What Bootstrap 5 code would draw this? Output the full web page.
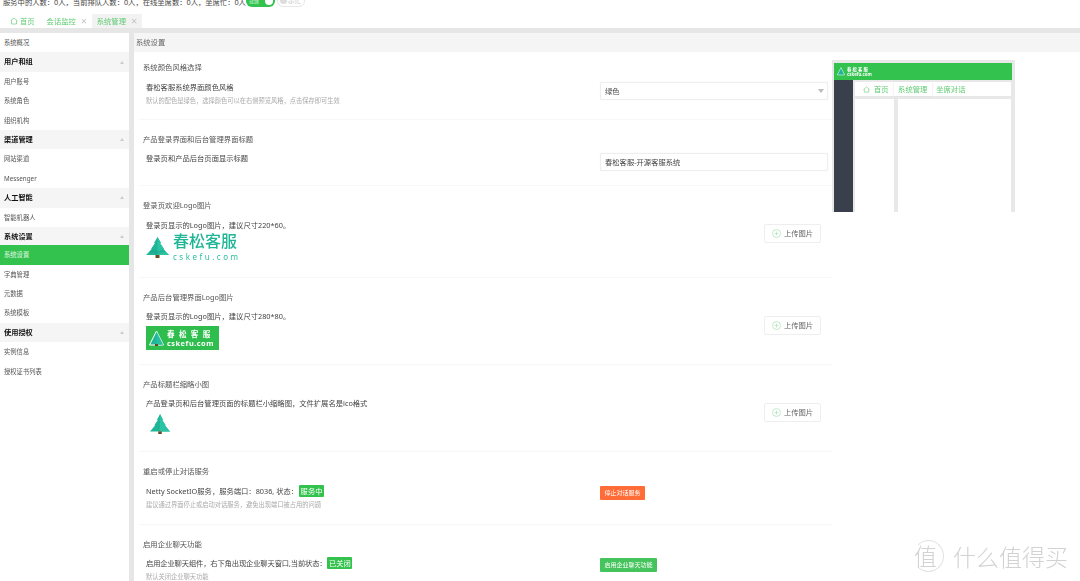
<!DOCTYPE html>
<html lang="zh-CN">
<head>
<meta charset="UTF-8">
<title>系统设置</title>
<link href="https://cdn.jsdelivr.net/npm/bootstrap@5.3.2/dist/css/bootstrap.min.css" rel="stylesheet">
<script src="https://cdn.jsdelivr.net/npm/bootstrap@5.3.2/dist/js/bootstrap.bundle.min.js"></script>
<style>
html, body { height: 100%; }
body {
    width: 1080px; height: 581px; overflow: hidden; position: relative;
    font-family: "Noto Sans", "Noto Sans CJK SC", sans-serif;
    color: #444; background: #e6e6e6; font-size: 7.3px; line-height: 14px;
    filter: blur(.3px);
}
.top-strip { height: 14px; background: #fff; overflow: hidden; padding-left: 3px; white-space: nowrap; }
.top-inner { height: 14px; margin-top: -5px; }
.stat-text { font-size: 7.3px; color: #444; }
.online-pill { width: 29px; height: 12px; background: #32c24d; border-radius: 6px; color: #d9f5df; font-size: 5px; padding: 0 0 0 3px; line-height: 12px; position: relative; }
.online-pill i { position: absolute; right: 2px; top: 2px; width: 8px; height: 8px; border-radius: 50%; background: #fff; }
.busy-pill { width: 28px; height: 12px; margin-left: 2px; border: 1px solid #e6e6e6; border-radius: 6px; color: #bbb; font-size: 6.5px; line-height: 10px; padding-left: 2px; background: #fff; }
.busy-pill i { display: inline-block; width: 7px; height: 7px; border-radius: 50%; background: #ddd; margin-right: 1px; vertical-align: -1px; }
.tab-strip { height: 14px; background: #fff; padding-left: 5px; }
.tab-strip .nav-link { height: 14px; padding: 0 5px; font-size: 7.3px; line-height: 14px; color: #5fcb72; border-radius: 0; display: flex; align-items: center; }
.tab-strip .nav-link.active { background: #f2f2f2; }
.tab-strip .tab-home { padding-right: 7px; }
.tab-home svg { margin-right: 2px; }
.tab-x { color: #c4c4c4; font-size: 11px; width: 6px; text-align: center; margin-left: 5px; }
.page-body { margin-top: 5px; height: 548px; }
.side-menu { width: 129px; background: #fff; margin-right: 5px; flex-shrink: 0; display: block; }
.side-menu .list-group-item { height: 19.4px; padding: 0 4px; border: 0; border-radius: 0; font-size: 6.3px; line-height: 19.4px; color: #555; background: #fff; }
.side-menu .list-group-item.menu-head { background: #f5f5f5; color: #111; font-size: 7.2px; font-weight: 700; display: flex; justify-content: space-between; align-items: center; }
.side-menu .list-group-item.active { background: #32c24d; color: #e8f8eb; }
.caret-up { width: 0; height: 0; border-left: 2.5px solid transparent; border-right: 2.5px solid transparent; border-bottom: 3px solid #ccc; margin-right: 1px; }
.main-pane { background: #fff; min-width: 0; }
.pane-title { height: 19px; background: #f5f5f5; padding-left: 2px; font-size: 7.3px; line-height: 19px; color: #666; }
.settings-col { width: 693px; margin-left: 5px; flex-shrink: 0; }
.set-item { border-bottom: 1px solid #f7f7f7; padding: 12px 4px 0; }
.set-item:first-child { padding-top: 8px; }
.set-item:last-child { border-bottom: 0; }
.h-s1 { height: 68px; } .h-s2 { height: 66px; } .h-s3 { height: 92px; } .h-s4 { height: 87px; }
.h-s5 { height: 87px; } .h-s6 { height: 73px; } .h-s7 { height: 60px; }
.set-title { color: #555; font-size: 7.35px; line-height: 14px; }
.set-row { margin-top: 5px; padding-left: 3px; }
.set-row.row-wide { margin-top: 6px; }
.set-label { color: #444; font-size: 7.3px; line-height: 14px; }
.tight-label { letter-spacing: -.15px; }
.set-hint { color: #aaa; font-size: 6.25px; line-height: 12px; margin-top: 1px; }
.ctl-col { width: 228px; flex-shrink: 0; }
.mt-ctl { margin-top: 2px; }
.mt-up1 { margin-top: 6px; } .mt-up2 { margin-top: 7px; }
.fake-input.form-control, .fake-input.form-select { height: 18px; min-height: 0; padding: 0 4px; font-size: 7.3px; line-height: 14px; border: 1px solid #eee; border-radius: 2px; color: #444; box-shadow: 0 0 1px #e6e6e6; }
.fake-input.form-select { background-image: url("data:image/svg+xml,%3Csvg xmlns='http://www.w3.org/2000/svg' viewBox='0 0 6 4'%3E%3Cpath d='M0 0h6L3 4z' fill='%23bbb'/%3E%3C/svg%3E"); background-size: 6px 4px; background-position: right 3px center; }
.upload-btn.btn { height: 19px; width: 57px; padding: 0; margin-right: 7px; border: 1px solid #eee; border-radius: 2px; background: #fff; color: #666; font-size: 7.3px; line-height: 17px; display: inline-flex; align-items: center; justify-content: center; gap: 3px; }
.act-btn.btn { height: 14px; padding: 0 4.5px; border: 0; border-radius: 1px; color: #fff; font-size: 6px; line-height: 14px; display: block; }
.act-stop.btn { background: #ff6c37; }
.act-start.btn { background: #45c35c; }
.state-tag.badge { background: #32c24d; color: #fff; font-size: 7.3px; font-weight: 400; line-height: 12px; padding: 0 1.5px; border-radius: 1px; margin-left: 1px; vertical-align: baseline; height: 12px; letter-spacing: 0; }
.logo-big { margin-top: 0; height: 30px; gap: 4px; }
.logo-big-name { color: #1fb596; font-size: 16px; font-weight: 500; line-height: 18px; margin-top: -1px; }
.logo-big-url { color: #2bbfa2; font-size: 8px; letter-spacing: 2.5px; line-height: 9px; margin-top: 2px; }
.logo-green { width: 73px; height: 24px; margin-top: 3px; background: #2fbd4d; gap: 3px; padding-left: 3px; }
.logo-green-name { color: #fff; font-size: 7.6px; font-weight: 700; letter-spacing: 4.300px; line-height: 10px; white-space: nowrap; }
.logo-green-url { color: #fff; font-size: 7.4px; font-weight: 700; letter-spacing: .5px; line-height: 8px; }
.preview-box { width: 183px; height: 152px; margin-top: 8px; background: #e8e8e8; padding: 3px 3px 0 2px; flex-shrink: 0; }
.preview-head { height: 17px; background: #32c24d; gap: 2px; padding-left: 3px; }
.preview-brand { color: #fff; font-size: 4.4px; line-height: 5px; font-weight: 700; white-space: nowrap; }
.preview-rail { width: 19px; background: #3a3f4c; flex-shrink: 0; }
.preview-work { padding: 2px 1px 0 2px; gap: 3px; min-width: 0; }
.preview-tabs { height: 14px; background: #fff; padding-left: 8px; color: #5fcb72; font-size: 7.3px; line-height: 15px; }
.preview-tabs span { padding: 0 4.5px; }
.preview-tabs .on { background: #fff; box-shadow: 0 0 2px #ddd; }
.preview-tabs .home-tab { padding: 0; margin-right: 5px; }
.preview-left { width: 39px; background: #fff; }
.preview-right { background: #fff; }
.zdm-mark { position: absolute; right: 12px; bottom: 9px; color: #d2d2d2; font-size: 23px; line-height: 30px; gap: 9px; font-family: "Noto Sans CJK SC", sans-serif; font-weight: 300; }
.zdm-ring { width: 31px; height: 32px; border: 1px solid #e2e2e2; border-left-color: transparent; border-radius: 50%; font-size: 23px; line-height: 29px; text-align: left; }
</style>
</head>
<body>

<div class="top-strip">
    <div class="top-inner d-flex align-items-start">
        <span class="stat-text">服务中的人数：0人，当前排队人数：0人，在线坐席数：0人，坐席忙：0人</span>
        <span class="online-pill">就绪<i></i></span>
        <span class="busy-pill"><i></i>示忙</span>
    </div>
</div>

<ul class="nav tab-strip">
    <li class="nav-item">
        <a class="nav-link tab-home" href="#">
            <svg width="8" height="8" viewBox="0 0 16 16" fill="none" stroke="#5fcb72" stroke-width="1.3"><path d="M1 8l7-6 7 6M3 7v7h10V7"/></svg>首页
        </a>
    </li>
    <li class="nav-item"><a class="nav-link" href="#">会话监控<span class="tab-x">×</span></a></li>
    <li class="nav-item"><a class="nav-link active" href="#">系统管理<span class="tab-x">×</span></a></li>
</ul>

<div class="page-body d-flex">
    <div class="side-menu list-group list-group-flush">
        <a class="list-group-item" href="#">系统概况</a>
        <div class="list-group-item menu-head">用户和组<span class="caret-up"></span></div>
        <a class="list-group-item" href="#">用户账号</a>
        <a class="list-group-item" href="#">系统角色</a>
        <a class="list-group-item" href="#">组织机构</a>
        <div class="list-group-item menu-head">渠道管理<span class="caret-up"></span></div>
        <a class="list-group-item" href="#">网站渠道</a>
        <a class="list-group-item" href="#">Messenger</a>
        <div class="list-group-item menu-head">人工智能<span class="caret-up"></span></div>
        <a class="list-group-item" href="#">智能机器人</a>
        <div class="list-group-item menu-head">系统设置<span class="caret-up"></span></div>
        <a class="list-group-item active" href="#">系统设置</a>
        <a class="list-group-item" href="#">字典管理</a>
        <a class="list-group-item" href="#">元数据</a>
        <a class="list-group-item" href="#">系统模板</a>
        <div class="list-group-item menu-head">使用授权<span class="caret-up"></span></div>
        <a class="list-group-item" href="#">实例信息</a>
        <a class="list-group-item" href="#">授权证书列表</a>
    </div>

    <div class="main-pane flex-grow-1">
        <div class="pane-title">系统设置</div>
        <div class="d-flex">
            <div class="settings-col">
                <div class="set-item h-s1">
                    <div class="set-title">系统颜色风格选择</div>
                    <div class="set-row row-wide d-flex justify-content-between">
                        <div>
                            <div class="set-label">春松客服系统界面颜色风格</div>
                            <div class="set-hint">默认的配色是绿色，选择颜色可以在右侧预览风格，点击保存即可生效</div>
                        </div>
                        <div class="ctl-col mt-ctl">
                            <select class="form-select fake-input"><option>绿色</option></select>
                        </div>
                    </div>
                </div>

                <div class="set-item h-s2">
                    <div class="set-title">产品登录界面和后台管理界面标题</div>
                    <div class="set-row d-flex justify-content-between">
                        <div class="set-label">登录页和产品后台页面显示标题</div>
                        <div class="ctl-col mt-ctl">
                            <input class="form-control fake-input" type="text" value="春松客服-开源客服系统">
                        </div>
                    </div>
                </div>

                <div class="set-item h-s3">
                    <div class="set-title">登录页欢迎Logo图片</div>
                    <div class="set-row row-wide d-flex justify-content-between">
                        <div>
                            <div class="set-label">登录页显示的Logo图片，建议尺寸220*60。</div>
                            <div class="logo-big d-flex align-items-center">
                                <svg width="23" height="21" viewBox="0 0 23 21"><path d="M11.5 0L15 6l-1 0 4 6-1 0 6 6H0l6-6-1 0 4-6-1 0z" fill="#1fb596"/><path d="M11.5 0L15 6l-1 0 4 6-1 0 6 6H11.5z" fill="#2cc3a5"/><path d="M5 12l6.5 2 6.5-2 2 3-8.500 2-8.500-2z" fill="#18a387" opacity=".45"/><rect x="9.500" y="18" width="4" height="3" fill="#6e4a22"/></svg>
                                <div>
                                    <div class="logo-big-name">春松客服</div>
                                    <div class="logo-big-url">cskefu.com</div>
                                </div>
                            </div>
                        </div>
                        <div class="ctl-col text-end mt-up1">
                            <button class="btn upload-btn" type="button"><svg width="9" height="9" viewBox="0 0 18 18" fill="none" stroke="#a9dfb4" stroke-width="1.4"><circle cx="9" cy="9" r="8"/><path d="M9 5v8M5 9h8"/></svg>上传图片</button>
                        </div>
                    </div>
                </div>

                <div class="set-item h-s4">
                    <div class="set-title">产品后台管理界面Logo图片</div>
                    <div class="set-row d-flex justify-content-between">
                        <div>
                            <div class="set-label">登录页显示的Logo图片，建议尺寸280*80。</div>
                            <div class="logo-green d-flex align-items-center">
                                <svg width="15" height="17" viewBox="0 0 15 17"><path d="M7.500 1L14.500 15H.5z" fill="#1fb596" stroke="#fff" stroke-width="1"/><path d="M7.500 1v14h7z" fill="#2cc3a5" opacity=".7"/><rect x="6" y="14" width="3" height="2" fill="#6e4a22"/></svg>
                                <div>
                                    <div class="logo-green-name">春松客服</div>
                                    <div class="logo-green-url">cskefu.com</div>
                                </div>
                            </div>
                        </div>
                        <div class="ctl-col text-end mt-up2">
                            <button class="btn upload-btn" type="button"><svg width="9" height="9" viewBox="0 0 18 18" fill="none" stroke="#a9dfb4" stroke-width="1.4"><circle cx="9" cy="9" r="8"/><path d="M9 5v8M5 9h8"/></svg>上传图片</button>
                        </div>
                    </div>
                </div>

                <div class="set-item h-s5">
                    <div class="set-title">产品标题栏缩略小图</div>
                    <div class="set-row d-flex justify-content-between">
                        <div>
                            <div class="set-label">产品登录页和后台管理页面的标题栏小缩略图，文件扩展名是ico格式</div>
                            <svg class="d-block ms-1 mt-1" width="20" height="20" viewBox="0 0 23 23"><path d="M11.5 0L15 7l-1 0 4 6-1 0 6 7H0l6-7-1 0 4-6-1 0z" fill="#1fb596"/><path d="M11.5 0L15 7l-1 0 4 6-1 0 6 7H11.5z" fill="#2cc3a5"/><rect x="9.500" y="20" width="4" height="3" fill="#6e4a22"/></svg>
                        </div>
                        <div class="ctl-col text-end mt-up2">
                            <button class="btn upload-btn" type="button"><svg width="9" height="9" viewBox="0 0 18 18" fill="none" stroke="#a9dfb4" stroke-width="1.4"><circle cx="9" cy="9" r="8"/><path d="M9 5v8M5 9h8"/></svg>上传图片</button>
                        </div>
                    </div>
                </div>

                <div class="set-item h-s6">
                    <div class="set-title">重启或停止对话服务</div>
                    <div class="set-row row-wide d-flex justify-content-between">
                        <div>
                            <div class="set-label">Netty SocketIO服务，服务端口：8036, 状态：<span class="badge state-tag">服务中</span></div>
                            <div class="set-hint">建议通过界面停止或启动对话服务，避免出现端口被占用的问题</div>
                        </div>
                        <div class="ctl-col mt-ctl">
                            <button class="btn act-btn act-stop" type="button">停止对话服务</button>
                        </div>
                    </div>
                </div>

                <div class="set-item h-s7">
                    <div class="set-title">启用企业聊天功能</div>
                    <div class="set-row d-flex justify-content-between">
                        <div>
                            <div class="set-label tight-label">启用企业聊天组件，右下角出现企业聊天窗口,当前状态：<span class="badge state-tag">已关闭</span></div>
                            <div class="set-hint">默认关闭企业聊天功能</div>
                        </div>
                        <div class="ctl-col mt-ctl">
                            <button class="btn act-btn act-start" type="button">启用企业聊天功能</button>
                        </div>
                    </div>
                </div>
            </div>

            <div class="preview-box d-flex flex-column">
                <div class="preview-head d-flex align-items-center">
                    <svg width="8" height="9" viewBox="0 0 15 17"><path d="M7.500 1L14.500 15H.5z" fill="#1fb596" stroke="#fff" stroke-width="1"/></svg>
                    <div class="preview-brand"><div>春 松 客 服</div><div>cskefu.com</div></div>
                </div>
                <div class="d-flex flex-grow-1">
                    <div class="preview-rail"></div>
                    <div class="preview-work d-flex flex-column flex-grow-1">
                        <div class="preview-tabs d-flex">
                            <svg class="align-self-center me-1" width="7" height="7" viewBox="0 0 16 16" fill="none" stroke="#5fcb72" stroke-width="1.3"><path d="M1 8l7-6 7 6M3 7v7h10V7"/></svg>
                            <span class="home-tab">首页</span><span class="on">系统管理</span><span>坐席对话</span>
                        </div>
                        <div class="d-flex flex-grow-1 gap-1">
                            <div class="preview-left"></div>
                            <div class="preview-right flex-grow-1"></div>
                        </div>
                    </div>
                </div>
            </div>
        </div>
    </div>
</div>

<div class="zdm-mark d-flex align-items-center">
    <div class="zdm-ring">值</div>
    <div>什么值得买</div>
</div>

</body>
</html>
